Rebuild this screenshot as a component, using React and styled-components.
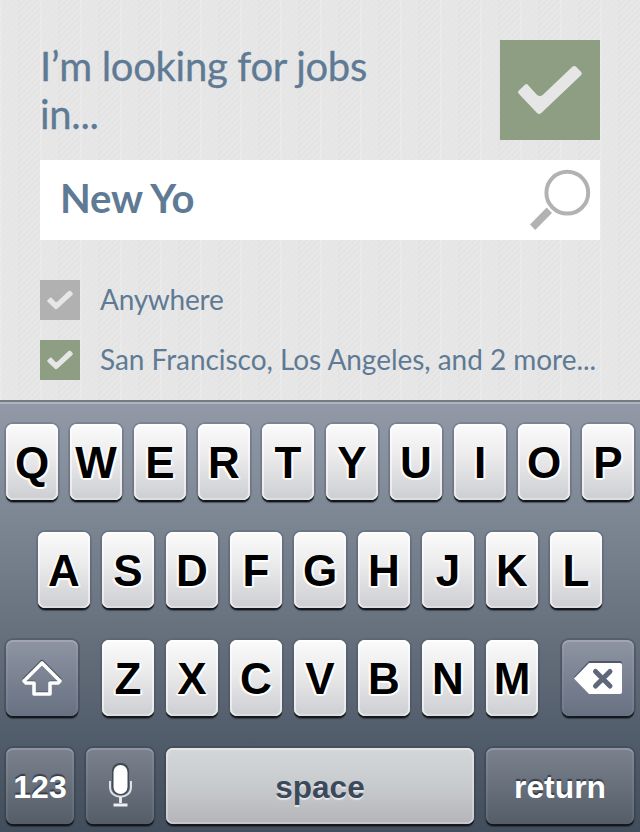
import React from "react";
import styled, { createGlobalStyle } from "styled-components";

const GlobalStyle = createGlobalStyle`
  *, *::before, *::after { box-sizing: border-box; }
  body { margin: 0; width: 640px; height: 832px; overflow: hidden; }
`;

const Screen = styled.main`
  width: 640px;
  height: 832px;
  display: flex;
  flex-direction: column;
  overflow: hidden;
  font-family: Lato, sans-serif;
  color: #5f7a94;
`;

const SearchPanel = styled.section`
  height: 400px;
  padding: 40px 40px 0;
  background:
    linear-gradient(90deg, rgba(255,255,255,0.18) 0 2px, rgba(231,231,231,0.6) 2px 18px, rgba(0,0,0,0.006) 18px 20px, transparent 20px) 0 0 / 40px 100%,
    repeating-linear-gradient(135deg, rgba(0,0,0,0.02) 0 1.41px, transparent 1.41px 4.24px),
    #e7e7e7;
`;

const Header = styled.header`
  display: flex;
  justify-content: space-between;
  height: 120px;
`;

const Title = styled.h1`
  margin: 0;
  padding-top: 2px;
  width: 350px;
  font-size: 40px;
  line-height: 48px;
  font-weight: 400;
  letter-spacing: -0.3px;
  -webkit-text-stroke: 0.3px currentColor;
`;

const ConfirmButton = styled.button`
  width: 100px;
  height: 100px;
  padding: 0;
  border: 0;
  background: #8e9e83;
  color: #e6e6e6;
  svg { display: block; }
`;

const SearchBox = styled.div`
  height: 80px;
  padding: 0 8px 0 20px;
  display: flex;
  align-items: center;
  justify-content: space-between;
  background: #fff;
`;

const Query = styled.span`
  font-size: 40px;
  line-height: 48px;
  font-weight: 700;
  letter-spacing: -0.1px;
  padding-bottom: 4px;
`;

const Options = styled.div`
  padding-top: 40px;
  display: grid;
  gap: 20px;
`;

const Option = styled.div`
  display: flex;
  gap: 20px;
  height: 40px;
  font-size: 28px;
  line-height: 38px;
  white-space: nowrap;
  letter-spacing: ${(p) => p.$spacing};
`;

const CheckBox = styled.span`
  flex: none;
  width: 40px;
  height: 40px;
  background: ${(p) => (p.$checked ? "#8e9e83" : "#b1b1b1")};
  color: #e6e6e6;
  svg { display: block; }
`;

const Keyboard = styled.section`
  height: 432px;
  padding: 20px 6px 0;
  border-top: 2px solid #777b81;
  box-shadow: inset 0 2px #aab5c1;
  display: flex;
  flex-direction: column;
  gap: 30px;
  background: linear-gradient(#929aa7, #7c8592 28%, #636d7a 58%, #505b69 80%, #434e5c);
  font-family: "Liberation Sans", sans-serif;
  font-weight: 700;
`;

const KeyRow = styled.div`
  display: flex;
  justify-content: ${(p) => (p.$spread ? "space-between" : "center")};
  gap: 12px;
  padding-top: 2px;
  height: 78px;
`;

const LetterGroup = styled.div`
  display: flex;
  gap: 12px;
`;

const Key = styled.div`
  width: ${(p) => p.$width || 52}px;
  height: 76px;
  flex: none;
  display: flex;
  align-items: center;
  justify-content: center;
  border-radius: 7px;
`;

const LetterKey = styled(Key)`
  color: #000;
  font-size: 44px;
  padding-top: 2px;
  background: linear-gradient(#fbfbfb, #ececed 40%, #cdced2);
  box-shadow: inset 0 2px #fff, inset 2px 0 rgba(255,255,255,0.5), inset -2px 0 rgba(255,255,255,0.5),
    inset 0 -2px rgba(225,228,228,0.7), 0 2px #14181c, 0 3px 1px rgba(20,25,35,0.5), 0 0 0 2px rgba(65,80,100,0.25);
  text-shadow: 0 2px #fff, 2px 1px 1px #fff, -2px 1px 1px #fff;
`;

const DarkKey = styled(Key)`
  color: #fff;
  font-size: ${(p) => p.$size || 32}px;
  background: ${(p) => (p.$low ? "linear-gradient(#7b828e, #555d69)" : "linear-gradient(#8e94a2, #687182)")};
  box-shadow: inset 0 2px rgba(255,255,255,0.17), inset 2px 0 rgba(255,255,255,0.06), inset -2px 0 rgba(255,255,255,0.06),
    0 2px #14181e, 0 3px 1px rgba(20,25,35,0.5), 0 0 0 2px rgba(45,57,73,0.3);
  text-shadow: 0 -2px 1px rgba(45,52,63,0.85);
`;

const KeyLabel = styled.span`
  padding-top: ${(p) => p.$drop || 0}px;
`;

const SpaceKey = styled(Key)`
  color: #3b495b;
  font-size: 31.5px;
  background: linear-gradient(#d4d7d8, #c8cbce 50%, #b4b4b9);
  box-shadow: inset 0 2px #e4e6e5, inset 2px 0 rgba(255,255,255,0.28), inset -2px 0 rgba(255,255,255,0.28),
    inset 0 -2px rgba(215,216,218,0.5), 0 2px #14181e, 0 3px 1px rgba(20,25,35,0.5), 0 0 0 2px rgba(45,57,73,0.3);
  text-shadow: 0 2px 1px rgba(240,240,240,0.8);
`;

const Tick = () => (
  <svg width="100" height="100" viewBox="0 0 100 100" fill="currentColor">
    <path d="M18.6 50.8Q17.4 52.1 18.6 53.5L37 73Q39 75.1 41.3 73L81 35.3Q82.7 33.5 81 31.7L76.3 26.9Q74.2 24.9 72.1 26.9L43.2 54.4Q39.8 57.6 36.6 54.4L28.2 45.2Q26.5 43.2 24.7 44.9Z" />
  </svg>
);

const SmallTick = () => (
  <svg width="40" height="40" viewBox="0 0 40 40" fill="currentColor">
    <path d="M7.3 20.2L10.4 17.4 11.4 17.6 15.5 22.1 17 22.1 28.5 11 30.5 10.8 32.8 13.3 32.6 14.7 17 29.1 15.4 29.2 7.3 21.4Z" />
  </svg>
);

const SearchIcon = () => (
  <svg width="64" height="64" viewBox="0 0 64 64">
    <circle cx="39.3" cy="24.7" r="20.9" fill="none" stroke="#b2b2b2" strokeWidth="4" />
    <path d="M18.7 39.6L24 44.9 7.2 62 2 56.6Z" fill="#b2b2b2" />
  </svg>
);

const ShiftIcon = () => (
  <svg width="48" height="46" viewBox="0 0 48 46" fill="none" strokeLinejoin="round">
    <path d="M24 6L42 24 40 27H32V38H16V27H8L6 24Z" stroke="#4d5563" strokeWidth="3" />
    <path d="M24 8L42 26 40 28H32V39H16V28H8L6 26Z" stroke="#fff" strokeWidth="3.6" />
  </svg>
);

const DeleteIcon = () => (
  <svg width="52" height="38" viewBox="0 0 52 38">
    <path d="M2 18L17 2H48Q50 2 50 4V30Q50 32 48 32H17Z" fill="#505967" />
    <path d="M2 19.5L17 4H48Q50 4 50 6V33Q50 35 48 35H17Z" fill="#fff" />
    <path d="M23.5 12.5L38 27M38 12.5L23.5 27" stroke="#5e6878" strokeWidth="5" strokeLinecap="round" />
  </svg>
);

const MicIcon = () => (
  <svg width="28" height="48" viewBox="0 0 28 48" fill="none">
    <rect x="6" y="1" width="17" height="32" rx="8" fill="#404854" />
    <path d="M4 19V25C4 38 25 38 25 25V19" stroke="#dfe2e6" strokeWidth="2" />
    <path d="M14.5 35V41M7.5 43H21.5" stroke="#eef0f2" strokeWidth="2.8" />
    <rect x="7.5" y="3" width="14" height="29" rx="7" fill="#fff" />
  </svg>
);

const Letters = ({ value }) => [...value].map((letter) => <LetterKey key={letter}>{letter}</LetterKey>);

export default function App() {
  return (
    <Screen>
      <GlobalStyle />
      <SearchPanel>
        <Header>
          <Title>I’m looking for jobs in...</Title>
          <ConfirmButton aria-label="Confirm"><Tick /></ConfirmButton>
        </Header>
        <SearchBox><Query>New Yo</Query><SearchIcon /></SearchBox>
        <Options>
          <Option $spacing="-0.25px"><CheckBox><SmallTick /></CheckBox>Anywhere</Option>
          <Option $spacing="-0.04px"><CheckBox $checked><SmallTick /></CheckBox>San Francisco, Los Angeles, and 2 more...</Option>
        </Options>
      </SearchPanel>
      <Keyboard>
        <KeyRow><Letters value="QWERTYUIOP" /></KeyRow>
        <KeyRow><Letters value="ASDFGHJKL" /></KeyRow>
        <KeyRow $spread>
          <DarkKey $width={72}><ShiftIcon /></DarkKey>
          <LetterGroup><Letters value="ZXCVBNM" /></LetterGroup>
          <DarkKey $width={72}><DeleteIcon /></DarkKey>
        </KeyRow>
        <KeyRow>
          <DarkKey $low $width={68}><KeyLabel $drop={2}>123</KeyLabel></DarkKey>
          <DarkKey $low $width={68}><MicIcon /></DarkKey>
          <SpaceKey $width={308}><KeyLabel $drop={2}>space</KeyLabel></SpaceKey>
          <DarkKey $low $width={148} $size={31.8}><KeyLabel $drop={2}>return</KeyLabel></DarkKey>
        </KeyRow>
      </Keyboard>
    </Screen>
  );
}
